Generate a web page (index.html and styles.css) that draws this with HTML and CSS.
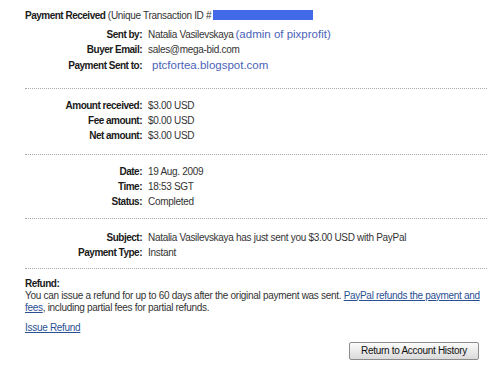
FILE: index.html
```html
<!DOCTYPE html>
<html>
<head>
<meta charset="utf-8">
<link rel="stylesheet" href="styles.css">
</head>
<body>
<div class="page">
  <div class="header"><b>Payment Received</b> (Unique Transaction ID #<span class="redact"></span></div>
  <div class="section first">
    <div class="row"><span class="lbl">Sent by:</span><span class="val">Natalia Vasilevskaya<span class="note">(admin of pixprofit)</span></span></div>
    <div class="row"><span class="lbl">Buyer Email:</span><span class="val">sales@mega-bid.com</span></div>
    <div class="row tall"><span class="lbl">Payment Sent to:</span><span class="val"><span class="note big">ptcfortea.blogspot.com</span></span></div>
  </div>
  <div class="section amounts">
    <div class="row"><span class="lbl">Amount received:</span><span class="val">$3.00 USD</span></div>
    <div class="row"><span class="lbl">Fee amount:</span><span class="val">$0.00 USD</span></div>
    <div class="row"><span class="lbl">Net amount:</span><span class="val">$3.00 USD</span></div>
  </div>
  <div class="section">
    <div class="row"><span class="lbl">Date:</span><span class="val">19 Aug. 2009</span></div>
    <div class="row"><span class="lbl">Time:</span><span class="val">18:53 SGT</span></div>
    <div class="row"><span class="lbl">Status:</span><span class="val">Completed</span></div>
  </div>
  <div class="section last">
    <div class="row"><span class="lbl">Subject:</span><span class="val">Natalia Vasilevskaya has just sent you $3.00 USD with PayPal</span></div>
    <div class="row"><span class="lbl">Payment Type:</span><span class="val">Instant</span></div>
  </div>
  <div class="refund">
    <div class="rtitle">Refund:</div>
    <p class="rtext">You can issue a refund for up to 60 days after the original payment was sent. <a href="#">PayPal refunds the payment and fees</a>, including partial fees for partial refunds.</p>
    <p class="issue"><a href="#">Issue Refund</a></p>
    <div class="actions"><button class="btn">Return to Account History</button></div>
  </div>
</div>
</body>
</html>
```
FILE: styles.css
```css
html, body {
  margin: 0;
  padding: 0;
  background: #fff;
}
body {
  font-family: Arial, "Liberation Sans", sans-serif;
  font-size: 10px;
  letter-spacing: -0.3px;
  color: #333;
}
b, .lbl, .rtitle {
  letter-spacing: -0.5px;
}
.page {
  width: 462px;
  padding: 9px 0 0 25px;
}
.header {
  line-height: 14px;
  color: #333;
}
.header b {
  color: #1a1a1a;
}
.redact {
  display: inline-block;
  width: 100px;
  height: 10px;
  margin-left: 2px;
  background: #4169e8;
  vertical-align: -1px;
}
.section {
  border-bottom: 1px dotted #a8a8a8;
  padding: 9px 0 9px;
}
.section.first {
  padding: 4px 0 14px;
}
.section.amounts {
  padding: 9px 0 10.5px;
}
.section.last {
  padding: 11px 0 8px;
}
.row {
  display: grid;
  grid-template-columns: 117px 1fr;
  column-gap: 6px;
  line-height: 15px;
  height: 15px;
}
.row.tall {
  line-height: 17px;
  height: 17px;
}
.lbl {
  text-align: right;
  font-weight: bold;
  color: #1a1a1a;
}
.val {
  color: #333;
  white-space: nowrap;
}
.note {
  font-family: Arial, "Liberation Sans", sans-serif;
  letter-spacing: 0;
  color: #4a62b8;
  font-size: 11.5px;
  margin-left: 2px;
}
.note.big {
  margin-left: 4px;
}
.refund {
  padding-top: 8px;
}
.rtitle {
  font-weight: bold;
  color: #1a1a1a;
  line-height: 13px;
}
.rtext {
  margin: 0;
  line-height: 12.5px;
}
a {
  color: #2a4f92;
  text-decoration: underline;
}
.issue {
  margin: 6px 0 0;
  line-height: 13px;
}
.actions {
  display: flex;
  justify-content: flex-end;
  padding: 8px 8px 0 0;
}
.btn {
  font-family: Arial, "Liberation Sans", sans-serif;
  font-size: 10px;
  letter-spacing: -0.3px;
  color: #111;
  height: 18px;
  width: 130px;
  padding: 0 2px;
  border: 1px solid #8c8c8c;
  border-radius: 2px;
  background: linear-gradient(#fbfbfb, #dadada);
  white-space: nowrap;
}
```
